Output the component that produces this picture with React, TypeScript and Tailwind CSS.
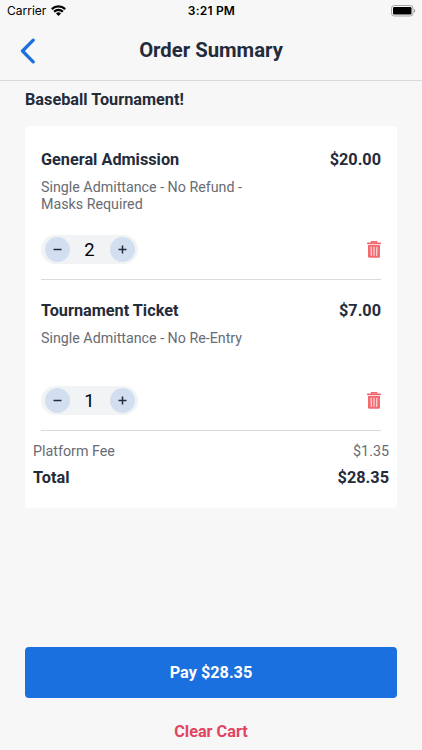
import React from "react";

interface CartItemProps {
  name: string;
  description: string;
  price: number;
  quantity: number;
}

const items: CartItemProps[] = [
  {
    name: "General Admission",
    description: "Single Admittance - No Refund - Masks Required",
    price: 20,
    quantity: 2,
  },
  {
    name: "Tournament Ticket",
    description: "Single Admittance - No Re-Entry",
    price: 7,
    quantity: 1,
  },
];

function StatusBar() {
  return (
    <div className="grid grid-cols-3 items-center h-[22px] pl-[7px] pr-[6px] font-['Inter',sans-serif] text-black">
      <div className="flex items-center gap-[5px]">
        <span className="text-[12px] leading-[22px]">Carrier</span>
        <svg className="mb-[2px]" width="15" height="11" viewBox="0 0 15 11" fill="none" stroke="#000" strokeWidth="2.2">
          <path d="M0.8 4.1a9.6 9.6 0 0 1 13.4 0" />
          <path d="M3.1 6.7a6.2 6.2 0 0 1 8.8 0" />
          <path d="M7.5 11 5 8.5a3.6 3.6 0 0 1 5 0z" fill="#000" stroke="none" />
        </svg>
      </div>
      <span className="text-center text-[12px] leading-[22px] font-semibold tracking-[0.2px]">
        3:21 PM
      </span>
      <svg className="justify-self-end mb-px" width="25" height="12" viewBox="0 0 25 12">
        <rect x="0.5" y="0.5" width="21.5" height="10.5" rx="2.8" fill="none" stroke="#a5a5a5" />
        <rect x="2" y="2" width="18.5" height="7.5" rx="1.2" fill="#000" />
        <path d="M23.2 4v3.6c1.4-.5 1.4-3.1 0-3.6z" fill="#888" />
      </svg>
    </div>
  );
}

function TrashIcon() {
  return (
    <svg width="14" height="17" viewBox="0 0 14 17" fill="none">
      <path d="M0.7 2.4h12.6" stroke="#f0646a" strokeWidth="1.6" strokeLinecap="round" />
      <path d="M4.6 2V.8h4.8V2" stroke="#f0646a" strokeWidth="1.4" />
      <path d="M1 4h12v11.2a1.5 1.5 0 0 1-1.5 1.5h-9A1.5 1.5 0 0 1 1 15.2z" fill="#f26b70" />
      <path d="m4.1 6.2.2 8.2M7 6.2v8.2M9.9 6.2l-.2 8.2" stroke="#fff" strokeWidth="0.9" strokeLinecap="round" />
    </svg>
  );
}

function QuantityPicker({ quantity }: { quantity: number }) {
  return (
    <div className="flex items-center justify-between w-[97px] h-[29px] pl-[4px] pr-[3px] rounded-full bg-[#f1f3f5]">
      <button className="flex items-center justify-center size-[25px] rounded-full bg-[#d2dff0]">
        <svg width="9" height="9" viewBox="0 0 9 9" stroke="#242b3d" strokeWidth="1.5">
          <path d="M0.5 4.5h8" />
        </svg>
      </button>
      <span className="pt-px pr-px text-[18.4px] leading-none text-black">{quantity}</span>
      <button className="flex items-center justify-center size-[25px] rounded-full bg-[#d2dff0]">
        <svg width="9" height="9" viewBox="0 0 9 9" stroke="#242b3d" strokeWidth="1.5">
          <path d="M0.5 4.5h8M4.5 0.5v8" />
        </svg>
      </button>
    </div>
  );
}

function CartItem({ item }: { item: CartItemProps }) {
  return (
    <div className="flex flex-col h-[151px] mx-4 border-b border-[#d9dadc]">
      <div className="flex justify-between mt-[21px] text-[16.25px] leading-5 font-bold">
        <h2>{item.name}</h2>
        <span>${item.price.toFixed(2)}</span>
      </div>
      <p className="w-[216px] h-[33px] mt-[9px] text-[14.25px] leading-[16.5px] text-[#686c73]">
        {item.description}
      </p>
      <div className="flex items-center justify-between mt-auto mb-[15px]">
        <QuantityPicker quantity={item.quantity} />
        <TrashIcon />
      </div>
    </div>
  );
}

function App() {
  return (
    <div className="flex flex-col w-[422px] h-[750px] overflow-hidden bg-[#f7f7f7] font-['Roboto',sans-serif] text-[#242b3a]">
      <StatusBar />
      <header className="grid grid-cols-[1fr_auto_1fr] items-center h-[59px] px-5 pb-px border-b border-[#d8d9db]">
        <button className="justify-self-start">
          <svg width="16" height="26" viewBox="0 0 16 26" fill="none">
            <path
              d="M13.2 2.2 2.5 13l10.7 10.8"
              stroke="#1c6fdd"
              strokeWidth="3.3"
              strokeLinecap="round"
              strokeLinejoin="round"
            />
          </svg>
        </button>
        <h1 className="mb-[2px] text-[20.3px] leading-6 font-bold">Order Summary</h1>
      </header>
      <main className="flex flex-col flex-1 px-[25px]">
        <p className="mt-[9px] text-[16.25px] leading-5 font-bold">Baseball Tournament!</p>
        <section className="h-[382px] mt-4 pt-[3px] bg-white rounded-[4px]">
          {items.map((item) => (
            <CartItem key={item.name} item={item} />
          ))}
          <div className="px-2 pt-[10px]">
            <div className="flex justify-between text-[14.3px] leading-5 text-[#686c73]">
              <span>Platform Fee</span>
              <span>$1.35</span>
            </div>
            <div className="flex justify-between mt-[7px] text-[16.3px] leading-5 font-bold">
              <span>Total</span>
              <span>$28.35</span>
            </div>
          </div>
        </section>
        <button className="h-[51px] mt-auto pt-[2px] rounded-[4px] bg-[#1b70df] text-[16.25px] font-bold text-white">
          Pay $28.35
        </button>
        <button className="mt-6 mb-2 text-[16.25px] leading-5 font-bold text-[#e2445f]">
          Clear Cart
        </button>
      </main>
    </div>
  );
}

export default App;
